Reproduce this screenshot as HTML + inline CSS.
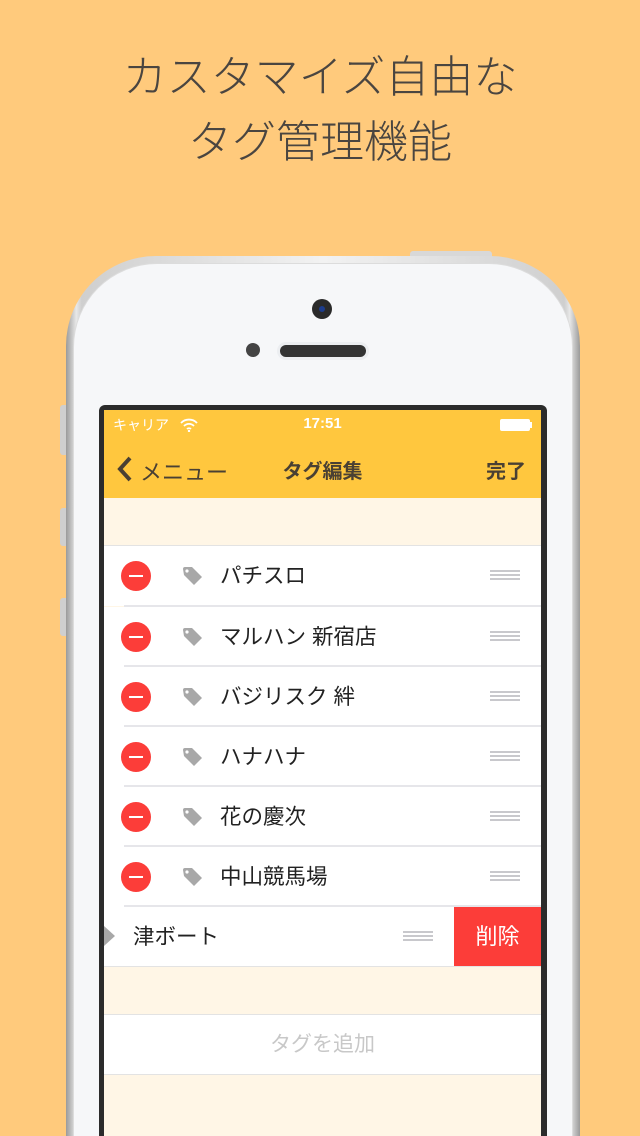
<!DOCTYPE html>
<html><head><meta charset="utf-8"><style>
*{margin:0;padding:0;box-sizing:border-box}
html{width:640px;height:1136px;overflow:hidden}
body{width:640px;height:1136px;background:#FFCA7C;position:relative;overflow:hidden;font-family:"Liberation Sans","Noto Sans CJK JP",sans-serif}
.title{position:absolute;left:0;width:640px;text-align:center;font-size:44px;color:#4a4540;font-weight:300;line-height:1}
.abs{position:absolute}
.row{position:absolute;left:104px;width:437px;height:60px;background:#fff}
.sep{position:absolute;left:124px;width:417px;height:2px;background:#e6e6ea}
.minus{position:absolute;left:17px;top:15px;width:30px;height:30px;border-radius:50%;background:#FC3D39}
.minus:after{content:"";position:absolute;left:8px;top:14px;width:14px;height:2px;background:#fff}
.tag{position:absolute;left:78px;top:20px}
.lbl{position:absolute;left:116px;top:0;line-height:60px;font-size:21.5px;color:#222}
.grip{position:absolute;left:386px;top:24px;width:30px;height:10px;border-top:2px solid #c8c8cc;border-bottom:2px solid #c8c8cc}
.grip:after{content:"";position:absolute;left:0;top:2px;width:30px;height:2px;background:#c8c8cc}
</style></head><body>
<div class="title" style="top:56px">カスタマイズ自由な</div>
<div class="title" style="top:121px">タグ管理機能</div>
<div class="abs" style="left:410px;top:251px;width:82px;height:8px;background:#d8d8d8;border-radius:3px 3px 0 0"></div>
<div class="abs" style="left:60px;top:405px;width:8px;height:50px;background:#cfcfcf;border-radius:3px 0 0 3px"></div>
<div class="abs" style="left:60px;top:508px;width:8px;height:38px;background:#cfcfcf;border-radius:3px 0 0 3px"></div>
<div class="abs" style="left:60px;top:598px;width:8px;height:38px;background:#cfcfcf;border-radius:3px 0 0 3px"></div>
<div class="abs" style="left:66px;top:256px;width:514px;height:880px;border-radius:90px 90px 0 0;background:linear-gradient(90deg,#9a9a9a,#e8e8e8 2%,#cfcfcf 3%,#f2f2f2 50%,#cfcfcf 97%,#e8e8e8 98%,#9a9a9a)"></div>
<div class="abs" style="left:73px;top:263px;width:500px;height:873px;border-radius:84px 84px 0 0;background:#f6f7f9;border:1px solid #dcdcdc;border-bottom:none"></div>
<div class="abs" style="left:312px;top:299px;width:20px;height:20px;border-radius:50%;background:#2a2a2a"><div style="position:absolute;left:7px;top:7px;width:6px;height:6px;border-radius:50%;background:#1c3c8c"></div></div>
<div class="abs" style="left:246px;top:343px;width:14px;height:14px;border-radius:50%;background:#444"></div>
<div class="abs" style="left:280px;top:345px;width:86px;height:12px;border-radius:6px;background:#333;box-shadow:0 0 0 3px #eceef1"></div>
<div class="abs" style="left:99px;top:405px;width:448px;height:731px;background:#2b2b2b;border-radius:6px 6px 0 0"></div>
<div class="abs" style="left:104px;top:410px;width:437px;height:726px;background:#FFF6E6"></div>
<div class="abs" style="left:104px;top:410px;width:437px;height:88px;background:#FFC73E"></div>
<div class="abs" style="left:113px;top:415px;font-size:14px;color:#fff">キャリア</div>
<svg class="abs" style="left:180px;top:418px" width="18" height="14" viewBox="0 0 18 14"><path d="M1 5a11 11 0 0 1 16 0M4 8a7 7 0 0 1 10 0M7 11a3 3 0 0 1 4 0" stroke="#fff" stroke-width="1.8" fill="none"/><circle cx="9" cy="13" r="1.2" fill="#fff"/></svg>
<div class="abs" style="left:104px;width:437px;top:415px;text-align:center;font-size:15px;color:#fff;font-weight:bold">17:51</div>
<div class="abs" style="left:500px;top:419px;width:30px;height:12px;background:#fff;border-radius:2px"></div>
<div class="abs" style="left:530px;top:422px;width:2px;height:6px;background:#fff"></div>
<svg class="abs" style="left:115px;top:455px" width="20" height="28" viewBox="0 0 20 28"><path d="M15 3L5 14l10 11" stroke="#4a4033" stroke-width="4" fill="none"/></svg>
<div class="abs" style="left:140px;top:455px;font-size:22px;color:#4a4033">メニュー</div>
<div class="abs" style="left:104px;width:437px;top:455px;text-align:center;font-size:20px;color:#4a4033;font-weight:bold">タグ編集</div>
<div class="abs" style="left:486px;top:455px;font-size:20px;color:#4a4033;font-weight:bold">完了</div>
<div class="abs" style="left:104px;top:545px;width:437px;height:1px;background:#e3e3e3"></div>
<div class="row" style="top:546px"><div class="minus"></div><svg class="tag" width="22" height="20" viewBox="0 0 22 20"><path d="M1 3a2 2 0 0 1 2-2h7l10 10-8 8L2 9z" fill="#a8a8a8"/><circle cx="5" cy="5" r="1.6" fill="#fff"/></svg><div class="lbl">パチスロ</div><div class="grip"></div></div>
<div class="sep" style="top:605px"></div>
<div class="row" style="top:607px"><div class="minus"></div><svg class="tag" width="22" height="20" viewBox="0 0 22 20"><path d="M1 3a2 2 0 0 1 2-2h7l10 10-8 8L2 9z" fill="#a8a8a8"/><circle cx="5" cy="5" r="1.6" fill="#fff"/></svg><div class="lbl">マルハン 新宿店</div><div class="grip"></div></div>
<div class="sep" style="top:665px"></div>
<div class="row" style="top:667px"><div class="minus"></div><svg class="tag" width="22" height="20" viewBox="0 0 22 20"><path d="M1 3a2 2 0 0 1 2-2h7l10 10-8 8L2 9z" fill="#a8a8a8"/><circle cx="5" cy="5" r="1.6" fill="#fff"/></svg><div class="lbl">バジリスク 絆</div><div class="grip"></div></div>
<div class="sep" style="top:725px"></div>
<div class="row" style="top:727px"><div class="minus"></div><svg class="tag" width="22" height="20" viewBox="0 0 22 20"><path d="M1 3a2 2 0 0 1 2-2h7l10 10-8 8L2 9z" fill="#a8a8a8"/><circle cx="5" cy="5" r="1.6" fill="#fff"/></svg><div class="lbl">ハナハナ</div><div class="grip"></div></div>
<div class="sep" style="top:785px"></div>
<div class="row" style="top:787px"><div class="minus"></div><svg class="tag" width="22" height="20" viewBox="0 0 22 20"><path d="M1 3a2 2 0 0 1 2-2h7l10 10-8 8L2 9z" fill="#a8a8a8"/><circle cx="5" cy="5" r="1.6" fill="#fff"/></svg><div class="lbl">花の慶次</div><div class="grip"></div></div>
<div class="sep" style="top:845px"></div>
<div class="row" style="top:847px"><div class="minus"></div><svg class="tag" width="22" height="20" viewBox="0 0 22 20"><path d="M1 3a2 2 0 0 1 2-2h7l10 10-8 8L2 9z" fill="#a8a8a8"/><circle cx="5" cy="5" r="1.6" fill="#fff"/></svg><div class="lbl">中山競馬場</div><div class="grip"></div></div>
<div class="sep" style="top:905px"></div>
<div class="row" style="top:907px"><svg class="abs" style="left:0;top:18px" width="12" height="22" viewBox="0 0 12 22"><path d="M0 1l11 10L0 21z" fill="#a8a8a8"/></svg><div class="lbl" style="left:29px">津ボート</div><div class="grip" style="left:299px"></div>
<div class="abs" style="left:350px;top:0;width:87px;height:59px;background:#FC3D39;color:#fff;font-size:22px;text-align:center;line-height:59px">削除</div></div>
<div class="abs" style="left:104px;top:966px;width:437px;height:1px;background:#e3e3e3"></div>
<div class="abs" style="left:104px;top:1014px;width:437px;height:1px;background:#e3e3e3"></div>
<div class="abs" style="left:104px;top:1015px;width:437px;height:59px;background:#fff;text-align:center;line-height:59px;font-size:21px;color:#c8c8c8">タグを追加</div>
<div class="abs" style="left:104px;top:1074px;width:437px;height:1px;background:#e3e3e3"></div>
</body></html>
